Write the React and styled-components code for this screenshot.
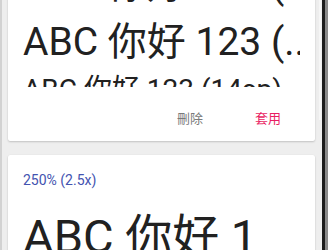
import React from "react";
import styled, { createGlobalStyle } from "styled-components";

const GlobalStyle = createGlobalStyle`
  html, body {
    margin: 0;
    padding: 0;
    background: #eeeeee;
    overflow: hidden;
  }
  body {
    font-family: Roboto, "Noto Sans CJK TC", sans-serif;
  }
`;

const Screen = styled.div`
  position: relative;
  display: flex;
  width: 328px;
  height: 250px;
  overflow: hidden;
  background: #eeeeee;
`;

const LeftEdge = styled.div`
  width: 2px;
  flex: none;
  background: #d2d2d2;
`;

const RightEdge = styled.div`
  width: 6px;
  flex: none;
  display: flex;
  & > span:first-child {
    width: 3px;
    background: #1c1c1c;
  }
  & > span:last-child {
    width: 3px;
    background: #8a8a8a;
  }
`;

const ScrollThumb = styled.div`
  position: absolute;
  top: 0;
  right: 7px;
  width: 2px;
  height: 120px;
  background: #f6f6f6;
`;

const List = styled.div`
  flex: 1;
  min-width: 0;
  display: flex;
  flex-direction: column;
  gap: 14px;
  padding: 0 7px 0 6px;
  margin-top: -60px;
`;

const Card = styled.div`
  flex: none;
  background: #ffffff;
  border-radius: 2px;
  overflow: hidden;
  box-shadow: 0 1px 2px rgba(0, 0, 0, 0.18), 0 0 1px rgba(0, 0, 0, 0.08);
  padding: ${(p) => (p.$top ? p.$top : 16)}px 15px 0 15px;
`;

const Preview = styled.div`
  height: ${(p) => p.$height}px;
  overflow: hidden;
`;

const Sample = styled.div`
  font-family: Roboto, "Noto Sans CJK TC", sans-serif;
  font-size: ${(p) => p.$size}px;
  line-height: ${(p) => p.$line}px;
  color: #212121;
  white-space: nowrap;
  overflow: hidden;
  margin-top: ${(p) => p.$gap || 0}px;
`;

const Label = styled.div`
  font-size: 14px;
  line-height: 20px;
  color: #4353b0;
`;

const Actions = styled.div`
  display: flex;
  justify-content: flex-end;
  gap: 14px;
  padding: 12px 0 6px 0;
`;

const TextButton = styled.button`
  width: 64px;
  height: 36px;
  border: none;
  background: transparent;
  padding: 0;
  font-family: Roboto, "Noto Sans CJK TC", sans-serif;
  font-size: 13px;
  color: ${(p) => (p.$accent ? "#e91e63" : "#7a7a7a")};
`;

export default function App() {
  return (
    <Screen>
      <GlobalStyle />
      <LeftEdge />
      <List>
        <Card>
          <Preview $height={131}>
            <Sample $size={39} $line={59}>ABC 你好 123 (..</Sample>
            <Sample $size={39} $line={54}>ABC 你好 123 (..</Sample>
            <Sample $size={28} $line={36} $gap={3}>ABC 你好 123 (14sp)</Sample>
          </Preview>
          <Actions>
            <TextButton>刪除</TextButton>
            <TextButton $accent>套用</TextButton>
          </Actions>
        </Card>
        <Card $top={15}>
          <Label>250% (2.5x)</Label>
          <Sample $size={47} $line={56} $gap={19}>ABC 你好 1</Sample>
        </Card>
      </List>
      <RightEdge>
        <span />
        <span />
      </RightEdge>
      <ScrollThumb />
    </Screen>
  );
}
